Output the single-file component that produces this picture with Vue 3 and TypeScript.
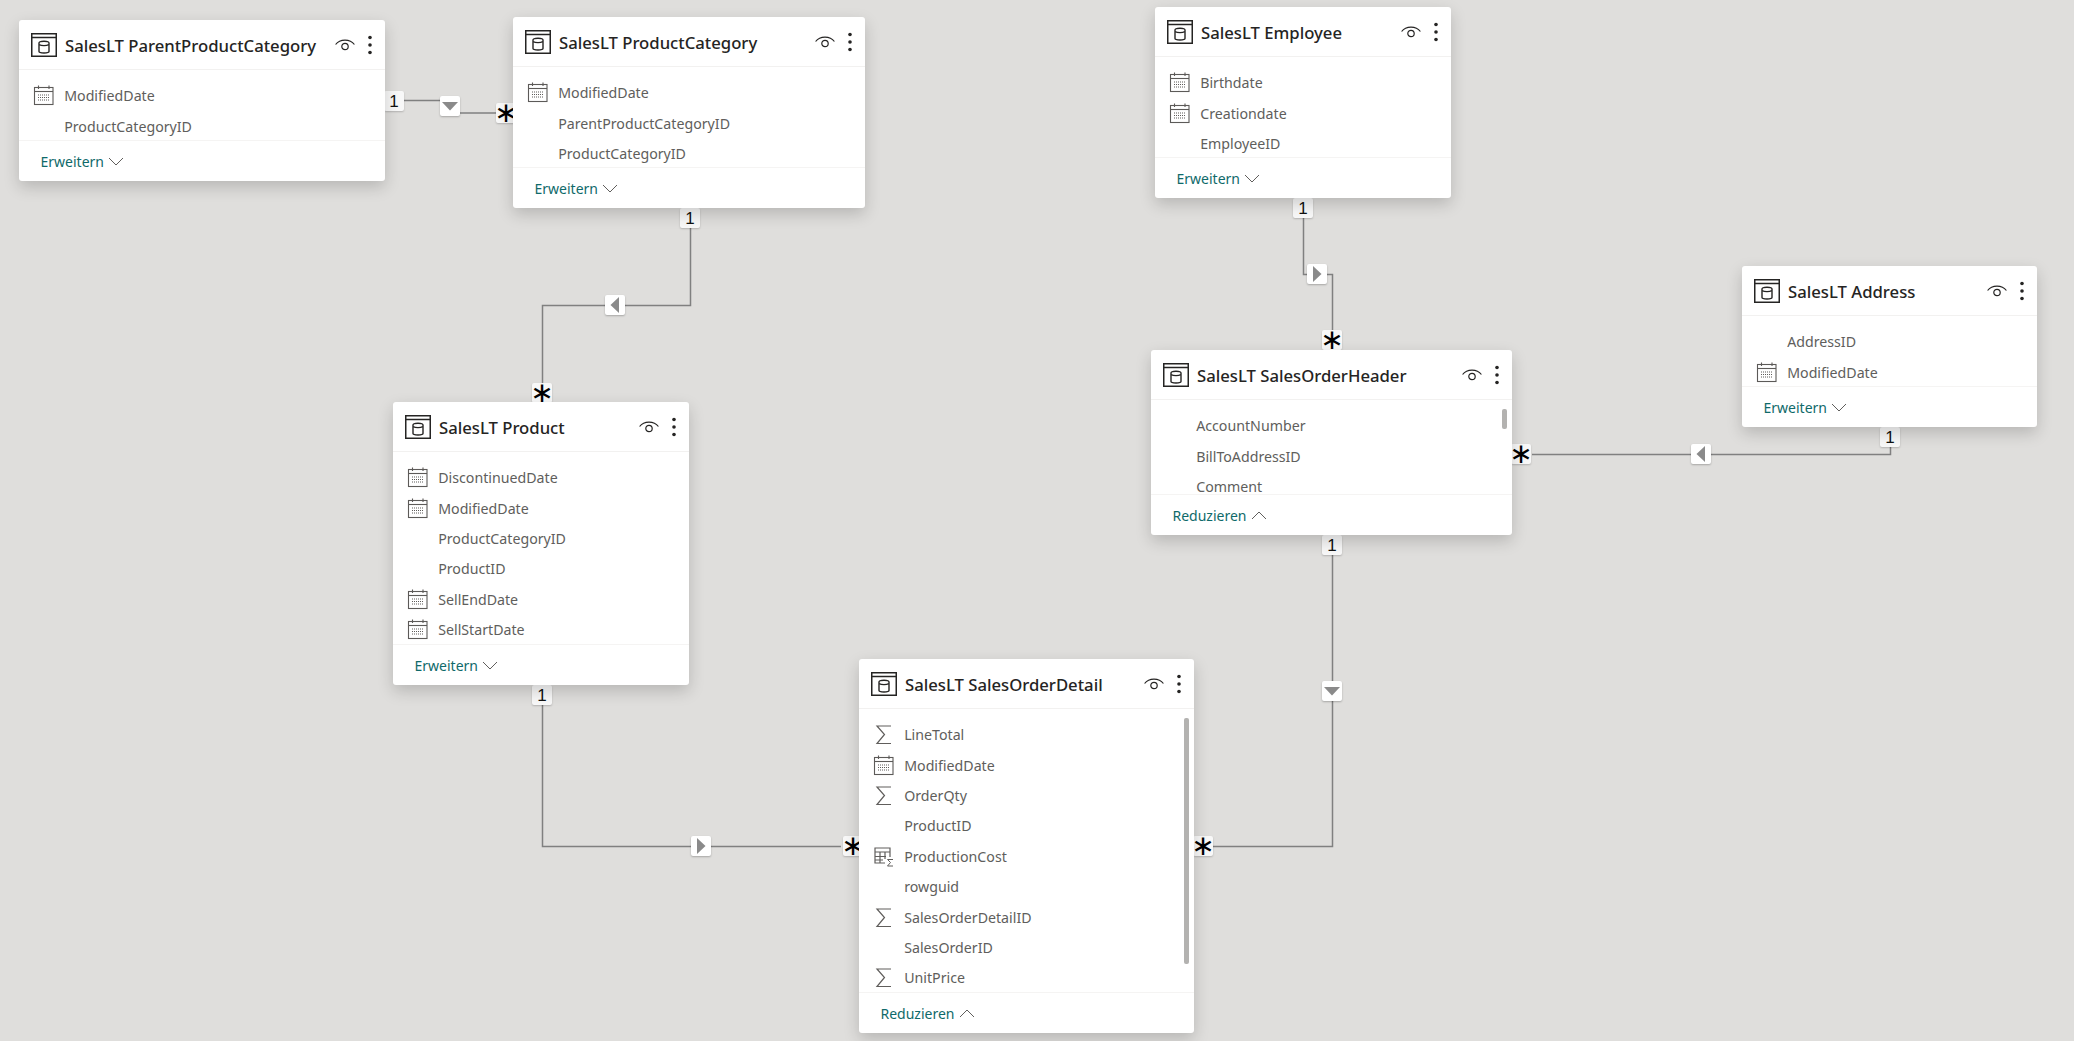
<script setup lang="ts">
type Kind = 'none' | 'cal' | 'sum' | 'calc'
interface Row { name: string; icon: Kind }
interface Card {
  title: string
  x: number; y: number; w: number; h: number
  rows: Row[]
  more: string
  thumb?: { top: number; height: number }
}
const n = (name: string): Row => ({ name, icon: 'none' })
const c = (name: string): Row => ({ name, icon: 'cal' })
const s = (name: string): Row => ({ name, icon: 'sum' })

const cards: Card[] = [
  { title: 'SalesLT ParentProductCategory', x: 19, y: 20, w: 366, h: 161, rows: [c('ModifiedDate'), n('ProductCategoryID')], more: 'Erweitern' },
  { title: 'SalesLT ProductCategory', x: 513, y: 17, w: 352, h: 191, rows: [c('ModifiedDate'), n('ParentProductCategoryID'), n('ProductCategoryID')], more: 'Erweitern' },
  { title: 'SalesLT Employee', x: 1155, y: 7, w: 296, h: 191, rows: [c('Birthdate'), c('Creationdate'), n('EmployeeID')], more: 'Erweitern' },
  { title: 'SalesLT Address', x: 1742, y: 266, w: 295, h: 161, rows: [n('AddressID'), c('ModifiedDate')], more: 'Erweitern' },
  { title: 'SalesLT SalesOrderHeader', x: 1151, y: 350, w: 361, h: 185, rows: [n('AccountNumber'), n('BillToAddressID'), n('Comment')], more: 'Reduzieren', thumb: { top: 9, height: 20 } },
  { title: 'SalesLT Product', x: 393, y: 402, w: 296, h: 283, rows: [c('DiscontinuedDate'), c('ModifiedDate'), n('ProductCategoryID'), n('ProductID'), c('SellEndDate'), c('SellStartDate')], more: 'Erweitern' },
  { title: 'SalesLT SalesOrderDetail', x: 859, y: 659, w: 335, h: 374, rows: [s('LineTotal'), c('ModifiedDate'), s('OrderQty'), n('ProductID'), { name: 'ProductionCost', icon: 'calc' }, n('rowguid'), s('SalesOrderDetailID'), n('SalesOrderID'), s('UnitPrice')], more: 'Reduzieren', thumb: { top: 9, height: 246 } },
]

const lines = [
  'M403 100.5H450V113H496',
  'M690.5 228V305.5H542.5V384',
  'M542.5 705V846.5H841',
  'M1332.5 555V846.5H1213',
  'M1303.5 218V274.5H1332.5V330',
  'M1890.5 447V454.5H1532',
]

type Dir = 'down' | 'left' | 'right'
const arrows: { x: number; y: number; dir: Dir }[] = [
  { x: 450, y: 106, dir: 'down' },
  { x: 615, y: 305, dir: 'left' },
  { x: 701, y: 846, dir: 'right' },
  { x: 1332, y: 691, dir: 'down' },
  { x: 1317, y: 274, dir: 'right' },
  { x: 1701, y: 454, dir: 'left' },
]
const arrowPts: Record<Dir, string> = {
  down: '2,6 18,6 10,14.5',
  left: '14,2 14,18 5.5,10',
  right: '6,2 6,18 14.5,10',
}
const badges: { x: number; y: number; t: string }[] = [
  { x: 394, y: 101, t: '1' }, { x: 506, y: 113, t: '∗' },
  { x: 690, y: 218, t: '1' }, { x: 542, y: 393, t: '∗' },
  { x: 542, y: 695, t: '1' }, { x: 853, y: 846, t: '∗' },
  { x: 1332, y: 545, t: '1' }, { x: 1203, y: 846, t: '∗' },
  { x: 1303, y: 208, t: '1' }, { x: 1332, y: 340, t: '∗' },
  { x: 1890, y: 437, t: '1' }, { x: 1521, y: 454, t: '∗' },
]
</script>

<template>
  <div class="canvas">
    <svg class="wires" width="2074" height="1041">
      <path v-for="d in lines" :key="d" :d="d" fill="none" stroke="#808080" stroke-width="1.5" />
    </svg>

    <div v-for="b in badges" :key="b.x + '-' + b.y" class="badge" :class="{ star: b.t !== '1' }" :style="{ left: b.x - 10 + 'px', top: b.y - 10 + 'px' }">{{ b.t }}</div>

    <div v-for="a in arrows" :key="a.x + '-' + a.y" class="arrow" :style="{ left: a.x - 10 + 'px', top: a.y - 10 + 'px' }">
      <svg width="20" height="20" viewBox="0 0 20 20"><polygon :points="arrowPts[a.dir]" fill="#8a8a8a" /></svg>
    </div>

    <section v-for="card in cards" :key="card.title" class="card" :style="{ left: card.x + 'px', top: card.y + 'px', width: card.w + 'px', height: card.h + 'px' }">
      <header class="head">
        <svg class="tbl" width="26" height="24" viewBox="0 0 26 24" fill="none" stroke="#252423" stroke-width="1.5">
          <rect x="0.75" y="0.75" width="24.5" height="22.5" />
          <path d="M1 4.5H25" />
          <path d="M8 10C8 7.6 18 7.6 18 10V18.5C18 20.4 8 20.4 8 18.5ZM8 11.5C10.5 13 15.5 13 18 11.5" stroke-width="1.4" />
        </svg>
        <span class="title">{{ card.title }}</span>
        <svg class="eye" width="20" height="14" viewBox="0 0 20 14" fill="none" stroke="#252423" stroke-width="1.2">
          <path d="M0.6 6.5C5 0.6 15 0.6 19.4 6.5" />
          <circle cx="10" cy="8.5" r="3.2" />
        </svg>
        <svg class="dots" width="4" height="20" viewBox="0 0 4 20" fill="#252423">
          <circle cx="2" cy="2.5" r="1.8" /><circle cx="2" cy="10" r="1.8" /><circle cx="2" cy="17.5" r="1.8" />
        </svg>
      </header>

      <div class="body">
        <ul class="rows">
          <li v-for="row in card.rows" :key="row.name" class="row">
            <span class="ico">
              <svg v-if="row.icon === 'cal'" width="21" height="21" viewBox="0 0 21 21" fill="none" stroke="#5c5a58" stroke-width="1.1">
                <rect x="1.5" y="2.5" width="18.5" height="17" />
                <path d="M1.5 6.5H20" />
                <path d="M5.5 0.5V4M16 0.5V4" />
                <path d="M5 10H17M5 12.5H17M5 15H17" stroke-dasharray="1 1" stroke="#5c5a58" />
              </svg>
              <svg v-else-if="row.icon === 'sum'" width="21" height="21" viewBox="0 0 21 21" fill="none" stroke="#605e5c" stroke-width="1.2">
                <path d="M18 2H4L11.5 10.5L4 19.5H18" />
              </svg>
              <svg v-else-if="row.icon === 'calc'" width="21" height="21" viewBox="0 0 21 21" fill="none" stroke="#605e5c" stroke-width="1.2">
                <path d="M12 17H2V2H17V11" />
                <path d="M2 6H17M2 10.5H13M2 14H10M7 6V17M12 6V13" />
                <path d="M20 13.5H14.5L17.5 16.5L14.5 20H20" stroke-width="1" />
              </svg>
            </span>
            <span class="name">{{ row.name }}</span>
          </li>
        </ul>
        <div v-if="card.thumb" class="thumb" :style="{ top: card.thumb.top + 'px', height: card.thumb.height + 'px' }"></div>
      </div>

      <footer class="foot">
        <span class="more">{{ card.more }}</span>
        <svg width="16" height="9" viewBox="0 0 16 9" fill="none" stroke="#605e5c" stroke-width="1" :class="{ flip: card.more === 'Reduzieren' }">
          <path d="M1 1L8 8L15 1" />
        </svg>
      </footer>
    </section>
  </div>
</template>

<style>
html, body { margin: 0; background: #dfdedc; }
</style>

<style scoped>
.canvas {
  position: relative;
  width: 2074px;
  height: 1041px;
  overflow: hidden;
  background: #dfdedc;
  font-family: "Noto Sans", "Open Sans", sans-serif;
}
.wires { position: absolute; left: 0; top: 0; }
.badge {
  position: absolute;
  width: 20px;
  height: 20px;
  box-sizing: border-box;
  display: flex;
  justify-content: center;
  background: #f8f8f8;
  border-radius: 2px;
  box-shadow: 0 1px 2px rgba(0, 0, 0, .2);
  font: 17px/22px "Liberation Sans", sans-serif;
  color: #111;
}
.badge.star { font: 400 28px/20px "DejaVu Sans", sans-serif; color: #000; }
.arrow {
  position: absolute;
  width: 20px;
  height: 20px;
  background: #fff;
  border-radius: 2px;
  box-shadow: 0 1px 2px rgba(0, 0, 0, .25);
}
.arrow svg { display: block; }
.card {
  position: absolute;
  display: flex;
  flex-direction: column;
  background: #fff;
  border-radius: 3px;
  box-shadow: 0 6px 16px rgba(0, 0, 0, .18);
}
.head {
  flex: none;
  height: 50px;
  box-sizing: border-box;
  display: flex;
  align-items: center;
  padding: 1px 11px 0 12px;
  border-bottom: 1.5px solid #f2f1f0;
}
.tbl { flex: none; }
.title {
  flex: 1;
  margin-left: 8px;
  font-size: 16.7px;
  font-weight: 500;
  color: #252423;
  white-space: nowrap;
}
.eye { flex: none; margin-right: 13px; }
.dots { flex: none; margin-right: 2px; }
.body {
  position: relative;
  flex: 1;
  min-height: 0;
  overflow: hidden;
  padding-top: 10.5px;
  box-sizing: border-box;
}
.rows { list-style: none; margin: 0; padding: 0; }
.row {
  height: 30.4px;
  display: flex;
  align-items: center;
  padding-left: 14px;
}
.ico {
  flex: none;
  width: 21px;
  height: 21px;
  margin-right: 10.2px;
}
.ico svg { display: block; }
.name {
  font-size: 14.2px;
  line-height: 13px;
  color: #605e5c;
  white-space: nowrap;
}
.thumb {
  position: absolute;
  right: 5px;
  width: 5px;
  border-radius: 2px;
  background: #b3b2b0;
}
.foot {
  flex: none;
  height: 41px;
  box-sizing: border-box;
  display: flex;
  align-items: center;
  gap: 4px;
  padding: 0 0 0 21.5px;
  border-top: 1px solid #f5f4f3;
}
.more { font-size: 14px; color: #0f6a6a; }
.flip { transform: scaleY(-1); }
</style>
